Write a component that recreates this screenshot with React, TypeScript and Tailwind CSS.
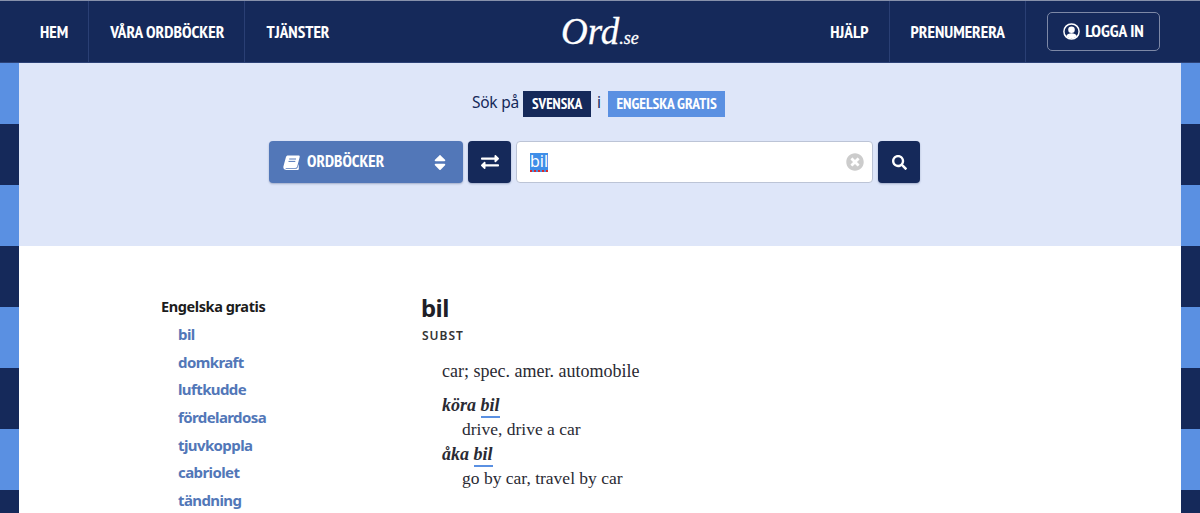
import { FaExchangeAlt, FaSearch, FaSort, FaTimesCircle } from 'react-icons/fa';

const narrow = "font-['Liberation_Sans_Narrow','PT_Sans_Narrow','Liberation_Sans',sans-serif]";
const serif = "font-['Liberation_Serif',serif]";
const sans = "font-['Noto_Sans',sans-serif]";

const leftNav = ['HEM', 'VÅRA ORDBÖCKER', 'TJÄNSTER'];
const rightNav = ['HJÄLP', 'PRENUMERERA'];
const related = ['bil', 'domkraft', 'luftkudde', 'fördelardosa', 'tjuvkoppla', 'cabriolet', 'tändning'];

function UserIcon() {
  return (
    <svg viewBox="0 0 17 17" className="h-[17px] w-[17px]">
      <circle cx="8.5" cy="8.5" r="7.6" fill="none" stroke="white" strokeWidth="1.5" />
      <circle cx="8.5" cy="6.8" r="3.3" fill="white" />
      <path d="M3.2 13.2C4 11 6 10.2 8.5 10.2S13 11 13.8 13.2C12.4 14.6 10.6 15.3 8.5 15.3S4.6 14.6 3.2 13.2Z" fill="white" />
    </svg>
  );
}

function BookIcon() {
  return (
    <svg viewBox="0 0 17 15" className="h-[15px] w-[17px]">
      <path
        d="M5 0.5H15.6C16.5 0.5 16.9 1.2 16.7 2L14.2 11.6C13.9 12.6 13.3 13 12.4 13H3.4C2.6 13 2.3 13.7 2.9 13.8H13C13.8 13.8 14.3 13.4 14.6 12.6L15.6 9 15.9 14C15.7 14.6 15 15 14.3 15H3.2C1.2 15 0 13.4 0.4 11.6L2.9 2.2C3.2 1.1 4 0.5 5 0.5Z"
        fill="white"
      />
      <path d="M6.2 4H13M5.5 6.4H12.3" stroke="#5277b8" strokeWidth="1" fill="none" />
    </svg>
  );
}

function Header() {
  return (
    <header className={`relative flex h-[63px] items-center justify-between border-t border-t-[#8791ab] border-b border-b-[#2c4277] bg-[#15295a] text-white ${narrow}`}>
      <nav className="flex h-full pl-[19px]">
        {leftNav.map((item, idx) => (
          <a
            key={item}
            className={`flex h-full items-center pl-[21px] pr-[20px] text-[17.3px] font-bold ${idx < 2 ? 'border-r border-[#2a3f74]' : ''}`}
          >
            {item}
          </a>
        ))}
      </nav>
      <div className={`absolute left-[561px] top-[10px] italic leading-[42px] [-webkit-text-stroke:0.3px_white] ${serif}`}>
        <span className="text-[37px]">Ord</span>
        <span className="text-[18px]">.se</span>
      </div>
      <nav className="flex h-full items-center pr-[40px]">
        {rightNav.map((item) => (
          <a key={item} className="flex h-full items-center border-r border-[#2a3f74] pl-[21px] pr-[20px] text-[17.3px] font-bold">
            {item}
          </a>
        ))}
        <a className="ml-[21px] flex h-[39px] w-[113px] items-center justify-center gap-[5px] rounded-[5px] border border-[#7d88a6] text-[17.5px] font-bold">
          <UserIcon />
          LOGGA IN
        </a>
      </nav>
    </header>
  );
}

function SearchPanel() {
  return (
    <section className="h-[183px] bg-[#dee6f9] pt-[28px]">
      <div className={`flex h-[26px] items-center justify-center pr-[3px] text-[#15295a] ${sans}`}>
        <span className="-mt-[3px] text-[15.5px] tracking-[-0.2px]">Sök på</span>
        <span className={`ml-[4px] flex h-[26px] w-[68px] items-center justify-center bg-[#15295a] text-[15px] font-bold text-white ${narrow}`}>
          SVENSKA
        </span>
        <span className="-mt-[3px] ml-[6px] mr-[7px] text-[15.5px]">i</span>
        <span className={`flex h-[26px] w-[117px] items-center justify-center bg-[#5a90e2] text-[15.5px] font-bold text-white ${narrow}`}>
          ENGELSKA GRATIS
        </span>
      </div>
      <div className="mt-[24px] flex h-[42px] justify-center gap-[5px] pr-[11px]">
        <div className={`flex w-[194px] items-center rounded-[4px] bg-[#5277b8] pl-[14px] pr-[17px] text-white shadow-[0_1px_2px_rgba(21,41,90,0.3)] ${narrow}`}>
          <BookIcon />
          <span className="ml-[7px] text-[17px] font-bold">ORDBÖCKER</span>
          <FaSort className="ml-auto h-[19px] w-[12px]" />
        </div>
        <button className="flex w-[43px] items-center justify-center rounded-[4px] bg-[#15295a] text-white shadow-[0_1px_2px_rgba(21,41,90,0.3)]">
          <FaExchangeAlt className="h-[18px] w-[18px]" />
        </button>
        <div className={`flex w-[357px] items-center rounded-[4px] border border-[#bcc4d6] bg-white pl-[13px] pr-[8px] text-[16px] ${sans}`}>
          <span className="border-b-2 border-dotted border-[#d92b2b] bg-[#3f8ee8] leading-[17px] text-white">bil</span>
          <FaTimesCircle className="ml-auto h-[18px] w-[18px] text-[#cccccc]" />
        </div>
        <button className="flex w-[42px] items-center justify-center rounded-[4px] bg-[#15295a] text-white shadow-[0_1px_2px_rgba(21,41,90,0.3)]">
          <FaSearch className="h-[15px] w-[15px]" />
        </button>
      </div>
    </section>
  );
}

function Sidebar() {
  return (
    <aside className={`w-[403px] pl-[142px] pt-[49px] ${sans}`}>
      <h3 className="text-[14.5px] font-bold leading-[22px] tracking-[-0.4px] text-[#1c1c1c]">Engelska gratis</h3>
      <ul className="mt-[4px] pl-[17px] text-[#5277b8]">
        {related.map((word) => (
          <li key={word} className="h-[27.7px] text-[15px] font-bold leading-[27.7px] tracking-[-0.6px]">
            {word}
          </li>
        ))}
      </ul>
    </aside>
  );
}

function Entry() {
  return (
    <article className="pt-[46px] text-[#1f1f28]">
      <h1 className={`-ml-px text-[24px] font-bold leading-[31px] tracking-[-0.6px] ${sans}`}>bil</h1>
      <div className={`mt-[5px] text-[12px] font-semibold leading-[16px] tracking-[1px] text-[#333333] ${sans}`}>SUBST</div>
      <div className={`pl-[20px] pt-[15px] text-[#2a2a33] ${serif}`}>
        <p className="text-[18px] leading-[24px]">car; spec. amer. automobile</p>
        <div className="mt-[10px] text-[18px] font-bold italic leading-[24px]">
          köra <span className="border-b-2 border-[#5a90e2] pb-px">bil</span>
        </div>
        <p className="pl-[20px] text-[17.5px] leading-[25px]">drive, drive a car</p>
        <div className="text-[18px] font-bold italic leading-[24px]">
          åka <span className="border-b-2 border-[#5a90e2] pb-px">bil</span>
        </div>
        <p className="pl-[20px] text-[17.5px] leading-[25px]">go by car, travel by car</p>
      </div>
    </article>
  );
}

export default function App() {
  return (
    <div className="h-[513px] overflow-hidden">
      <Header />
      <div className="h-[450px] bg-[repeating-linear-gradient(to_bottom,#5a90e2_0,#5a90e2_61px,#15295a_61px,#15295a_122px)] px-[19px]">
        <div className="h-full bg-white">
          <SearchPanel />
          <div className="flex">
            <Sidebar />
            <Entry />
          </div>
        </div>
      </div>
    </div>
  );
}
